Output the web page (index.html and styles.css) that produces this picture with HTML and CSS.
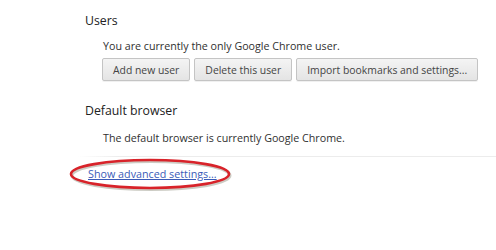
FILE: index.html
```html
<!DOCTYPE html>
<html>
<head>
<meta charset="utf-8">
<link rel="stylesheet" href="styles.css">
</head>
<body>
<div class="page">
  <section class="section">
    <div class="title">Users</div>
    <div class="body">
      <div class="desc">You are currently the only Google Chrome user.</div>
      <div class="buttons">
        <button class="btn">Add new user</button>
        <button class="btn">Delete this user</button>
        <button class="btn">Import bookmarks and settings...</button>
      </div>
    </div>
  </section>
  <section class="section section-second">
    <div class="title">Default browser</div>
    <div class="body">
      <div class="desc desc-second">The default browser is currently Google Chrome.</div>
    </div>
  </section>
  <div class="separator"></div>
  <div class="footer">
    <a class="advanced" href="#">Show advanced settings...</a>
    <svg class="circle" width="170" height="36" viewBox="0 0 170 36">
      <ellipse cx="85" cy="17.5" rx="79" ry="14" fill="none" stroke="#9a9a8a" stroke-opacity="0.5" stroke-width="3"/>
      <ellipse cx="84" cy="16" rx="79" ry="14" fill="none" stroke="#d8232a" stroke-width="2.6"/>
    </svg>
  </div>
</div>
</body>
</html>
```
FILE: styles.css
```css
html, body {
  margin: 0;
  padding: 0;
  background: #ffffff;
}
.page {
  width: 496px;
  height: 250px;
  font-family: "Open Sans", "Noto Sans", sans-serif;
  color: #333333;
  overflow: hidden;
}
.section {
  padding-left: 85px;
}
.title {
  font-size: 12.3px;
  line-height: 16px;
  color: #222222;
  padding-top: 13px;
}
.section-second .title {
  padding-top: 22px;
}
.body {
  padding-left: 17px;
}
.desc {
  font-size: 10.7px;
  line-height: 16px;
  margin-top: 9px;
  padding-left: 1px;
  color: #303030;
}
.desc-second {
  margin-top: 11px;
}
.buttons {
  display: flex;
  gap: 4px;
  margin-top: 4px;
}
.btn {
  flex: none;
  white-space: nowrap;
  font-family: "Open Sans", "Noto Sans", sans-serif;
  font-size: 10.4px;
  color: #444444;
  height: 23px;
  padding: 0 10px;
  border: 1px solid #c4c4c4;
  border-radius: 2px;
  background: linear-gradient(#f4f4f4, #e4e4e4);
  box-shadow: 0 1px 0 rgba(0,0,0,0.06);
}
.separator {
  margin-top: 10px;
  margin-left: 78px;
  height: 1px;
  background: linear-gradient(to right, #ffffff, #ececec 10%, #ececec);
}
.footer {
  position: relative;
  padding-left: 88px;
  padding-top: 4px;
  height: 20px;
}
.advanced {
  font-size: 10.75px;
  line-height: 16px;
  color: #3a5bb8;
  text-decoration: underline;
}
.circle {
  position: absolute;
  left: 66px;
  top: 1px;
}
```
